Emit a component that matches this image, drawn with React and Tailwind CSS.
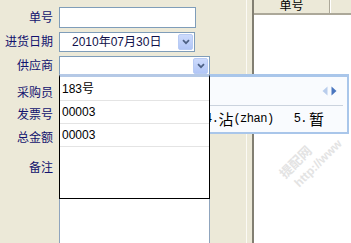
import React from "react";

const FONT = { fontFamily: '"Liberation Sans", "Noto Sans CJK SC", sans-serif' };
const MONO = { fontFamily: '"Liberation Mono", monospace', letterSpacing: "-0.5px" };
const CJK = { fontFamily: '"Noto Sans CJK SC", sans-serif' };

function DropBtn() {
  return (
    <div className="w-[15px] h-full rounded-[2px] bg-linear-to-b from-[#cddbfc] to-[#b1c6f6] border border-[#b8cbf4] flex items-center justify-center">
      <svg width="8" height="6" viewBox="0 0 8 6">
        <path d="M1 1.2 L4 4.2 L7 1.2" stroke="#4d6185" strokeWidth="1.7" fill="none" />
      </svg>
    </div>
  );
}

function Label({ children, className = "" }) {
  return (
    <div className={`w-[53px] text-right text-[12px] leading-[14px] text-[#12126e] shrink-0 ${className}`}>
      {children}
    </div>
  );
}

export default function App() {
  return (
    <div className="relative w-[351px] h-[243px] bg-[#ECE9D8] flex overflow-hidden" style={FONT}>
      {/* form */}
      <div className="w-[246px] flex flex-col pt-[7px] shrink-0 overflow-hidden">
        <div className="flex items-center h-[21px] shrink-0">
          <Label>单号</Label>
          <div className="ml-[6px] w-[137px] h-full border border-[#7f9db9] bg-white" />
        </div>
        <div className="flex items-center h-[20px] mt-[4px] shrink-0">
          <Label>进货日期</Label>
          <div className="ml-[6px] w-[136px] h-full border border-[#7f9db9] bg-white flex items-center p-[1px]">
            <div className="flex-1 pl-[11px] text-[12px] text-[#10104a] leading-[14px]">2010年07月30日</div>
            <DropBtn />
          </div>
        </div>
        <div className="flex items-center h-[20px] mt-[4px] shrink-0">
          <Label>供应商</Label>
          <div className="ml-[6px] w-[151px] h-full border border-[#7f9db9] bg-white flex items-center p-[1px]">
            <div className="flex-1" />
            <DropBtn />
          </div>
        </div>
        <div className="flex items-center h-[20px] mt-[7px] shrink-0">
          <Label>采购员</Label>
          <div className="ml-[6px] w-[151px] h-full border border-[#7f9db9] bg-white" />
        </div>
        <div className="flex items-center h-[20px] mt-[2px] shrink-0">
          <Label>发票号</Label>
          <div className="ml-[6px] w-[137px] h-full border border-[#7f9db9] bg-white" />
        </div>
        <div className="flex items-center h-[20px] mt-[3px] shrink-0">
          <Label>总金额</Label>
          <div className="ml-[6px] w-[137px] h-full border border-[#7f9db9] bg-white" />
        </div>
        <div className="flex items-start mt-[5px] shrink-0">
          <Label className="pt-[8px]">备注</Label>
          <div className="ml-[6px] w-[151px] h-[110px] border border-[#8fa4bd] bg-white" />
        </div>
      </div>

      {/* splitter */}
      <div className="w-px bg-[#fbfaf5] shrink-0" />
      <div className="w-[5px] shrink-0" />
      <div className="w-[2px] bg-[#827f72] shrink-0" />

      {/* grid */}
      <div className="flex-1 bg-white flex flex-col">
        <div className="flex h-[15px] bg-[#ECE9D8] border-b-2 border-[#aca899] shrink-0">
          <div className="w-[76px] flex justify-center items-start text-[12px] leading-[12px] text-black border-r border-[#aca899]">
            单号
          </div>
          <div className="flex-1 border-l border-white" />
        </div>
        <div className="flex-1" />
      </div>

      {/* watermark */}
      <div className="absolute left-[288px] top-[166px] -rotate-45 origin-left font-bold leading-[16px] text-[#e3e3e3] pointer-events-none">
        <div className="text-[13px]">提配网</div>
        <div className="text-[12px] pl-[4px]">http://www</div>
      </div>

      {/* IME candidate window */}
      <div className="absolute left-[150px] top-[74px] w-[199px] h-[60px] bg-[#f9fbfe] border-[#a9c6ea] border-t-[3px] border-x-2 border-b-2 flex flex-col">
        <div className="h-[28px] flex items-center justify-end pr-[10px] gap-[3px]">
          <svg width="6" height="10" viewBox="0 0 6 10">
            <path d="M5.5 0.5 L0.5 5 L5.5 9.5 Z" fill="#b9cdec" />
          </svg>
          <svg width="6" height="10" viewBox="0 0 6 10">
            <path d="M0.5 0.5 L5.5 5 L0.5 9.5 Z" fill="#4a76bf" />
          </svg>
        </div>
        <div className="h-px bg-[#cbd3de] mr-[4px]" />
        <div className="flex-1 flex items-center pl-[53px] text-black">
          <span className="text-[12px]" style={MONO}>4.</span>
          <span className="text-[15px] leading-[18px]" style={CJK}>沾</span>
          <span className="text-[12px]" style={MONO}>(zhan)</span>
          <span className="ml-[20px] text-[12px]" style={MONO}>5.</span>
          <span className="ml-[2px] text-[15px] leading-[18px]" style={CJK}>暂</span>
        </div>
      </div>

      {/* dropdown list */}
      <div className="absolute left-[59px] top-[74px] w-[151px] h-[125px] bg-white border-t-[3px] border-t-[#b5c9e6] border-x border-b border-x-black border-b-black flex flex-col text-[12px] text-black">
        <div className="h-[24px] flex items-center pl-[2px] border-b border-[#e4e4e4] shrink-0">183号</div>
        <div className="h-[23px] flex items-center pl-[2px] border-b border-[#e4e4e4] shrink-0">00003</div>
        <div className="h-[23px] flex items-center pl-[2px] border-b border-[#e4e4e4] shrink-0">00003</div>
      </div>
    </div>
  );
}
